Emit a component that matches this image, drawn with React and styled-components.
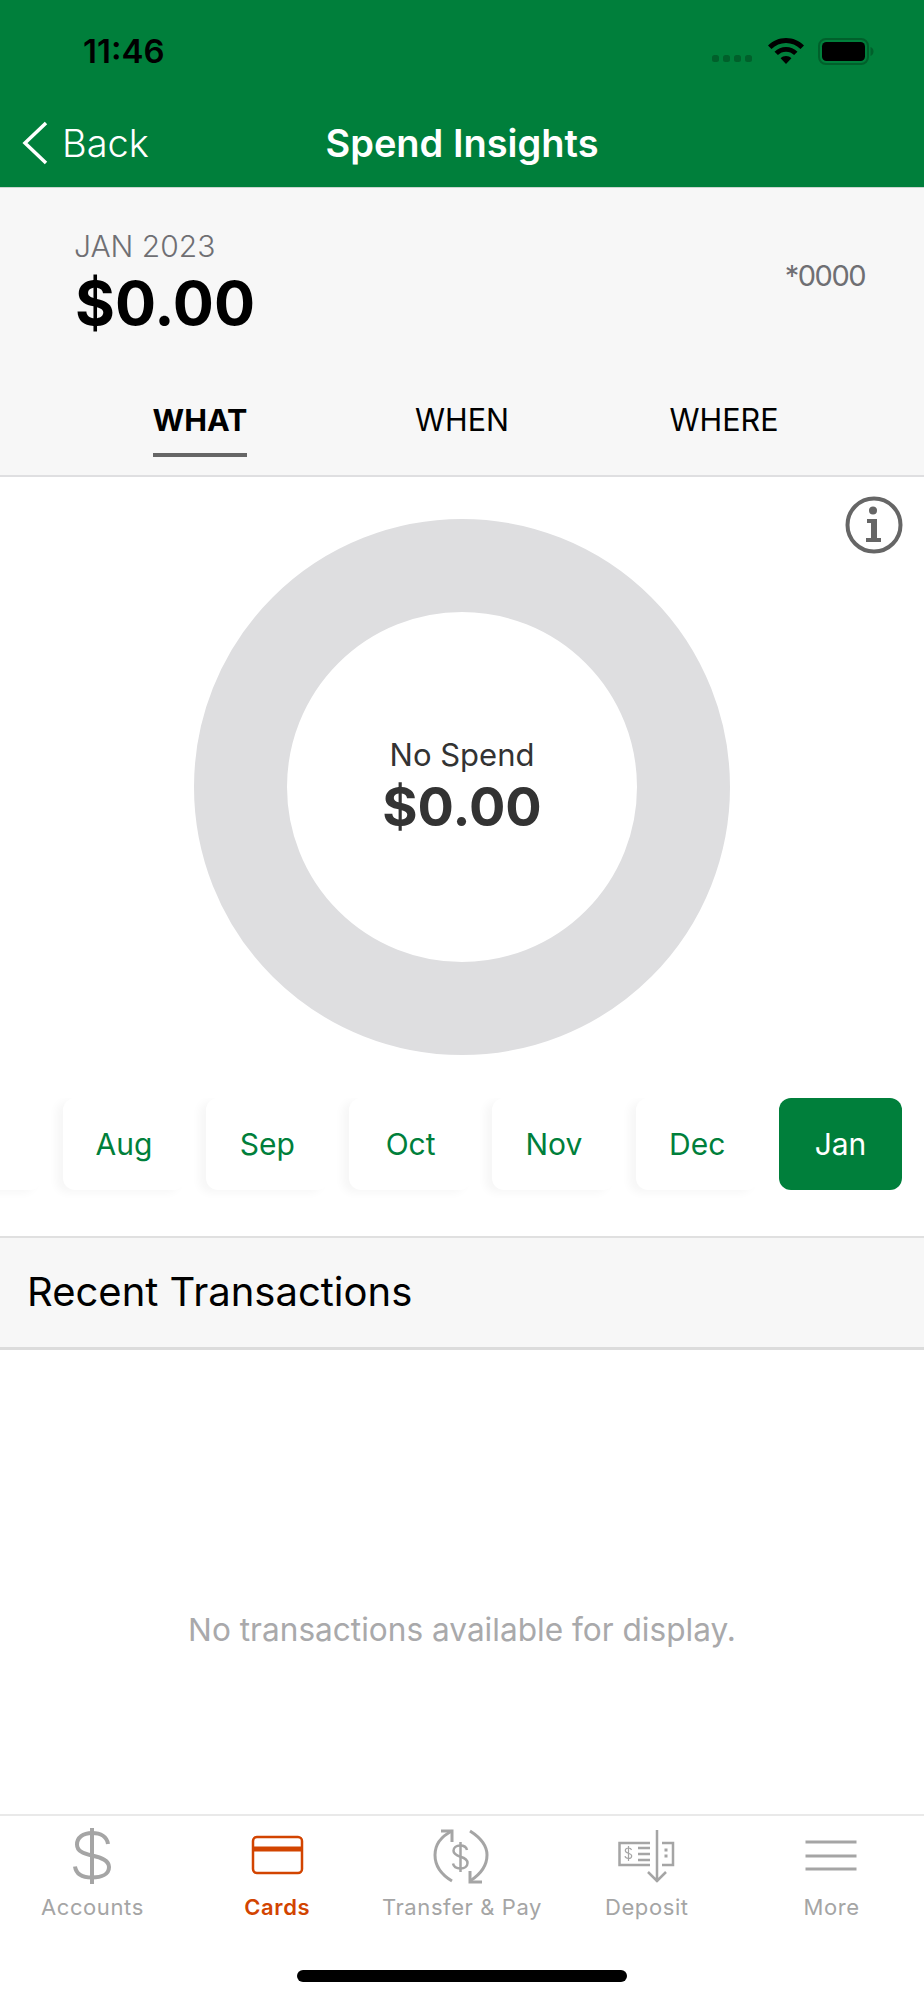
import React from 'react'
import styled, { createGlobalStyle } from 'styled-components'

const GlobalStyle = createGlobalStyle`
    html, body {
        margin: 0;
        padding: 0;
        background: #fff;
    }
    * {
        box-sizing: border-box;
    }
`;

const PAGE = styled.div`
    width: 924px;
    height: 2000px;
    overflow: hidden;
    display: flex;
    flex-direction: column;
    background: #fff;
    font-family: Inter, "Liberation Sans", sans-serif;
`;

const HEADER = styled.header`
    height: 188px;
    flex: none;
    background: #007f3b;
    border-bottom: 1px solid #c9d6cf;
`;

const STATUS_BAR = styled.div`
    height: 95px;
    display: flex;
    justify-content: space-between;
    align-items: flex-start;
    padding: 31px 50px 0 83px;
`;

const TIME = styled.span`
    font-size: 33px;
    line-height: 40px;
    font-weight: 600;
    color: #000;
`;

const NAV = styled.nav`
    display: grid;
    grid-template-columns: 1fr auto 1fr;
    align-items: center;
    height: 92px;
    padding: 3px 22px 0;
    color: #fff;
`;

const BACK = styled.a`
    display: flex;
    align-items: center;
    gap: 14px;
    font-size: 38px;
    font-weight: 300;
`;

const TITLE = styled.h1`
    margin: 0;
    font-size: 38px;
    font-weight: 600;
`;

const SUMMARY = styled.section`
    height: 289px;
    flex: none;
    background: #f7f7f7;
    border-bottom: 2px solid #dfdfe1;
    display: flex;
    flex-direction: column;
`;

const SUMMARY_TOP = styled.div`
    height: 194px;
    display: flex;
    justify-content: space-between;
    padding: 40px 59px 0 75px;
`;

const PERIOD = styled.div`
    font-size: 30px;
    line-height: 36px;
    font-weight: 300;
    color: #6f6f73;
    margin-left: -1px;
`;

const TOTAL = styled.div`
    margin-top: 5px;
    font-size: 61px;
    line-height: 68px;
    font-weight: 700;
    color: #000;
`;

const CARD_NUMBER = styled.div`
    margin-top: 30px;
    font-size: 29px;
    line-height: 36px;
    letter-spacing: -1.5px;
    color: #6f6f73;
`;

const TABS = styled.div`
    display: grid;
    grid-template-columns: 238px 286px 238px;
    justify-content: center;
`;

const TAB = styled.div`
    justify-self: center;
    height: 75px;
    padding-top: 20px;
    font-size: 30.5px;
    line-height: 36px;
    font-weight: ${props => props.active ? 700 : 400};
    color: #000;
    border-bottom: 4px solid ${props => props.active ? '#666' : 'transparent'};
`;

const CHART = styled.section`
    position: relative;
    flex: none;
    height: 621px;
    padding-top: 42px;
    display: flex;
    justify-content: center;
`;

const INFO = styled.svg`
    position: absolute;
    top: 19px;
    right: 21px;
`;

const RING = styled.div`
    width: 536px;
    height: 536px;
    border-radius: 50%;
    border: 93px solid #dedee0;
    display: flex;
    flex-direction: column;
    align-items: center;
    justify-content: center;
`;

const RING_LABEL = styled.div`
    font-size: 31px;
    line-height: 36px;
    color: #333;
`;

const RING_VALUE = styled.div`
    font-size: 54px;
    line-height: 60px;
    font-weight: 700;
    color: #333;
    margin-top: 4px;
`;

const MONTHS = styled.div`
    flex: none;
    height: 138px;
    overflow: hidden;
    display: flex;
    justify-content: flex-end;
    align-items: flex-start;
    gap: 20.3px;
    padding-right: 22px;
    padding-bottom: 12px;
`;

const MONTH = styled.div`
    flex: none;
    width: 123px;
    height: 92px;
    border-radius: 12px;
    display: flex;
    align-items: center;
    justify-content: center;
    font-size: 30px;
    background: ${props => props.active ? '#007f3b' : '#fff'};
    color: ${props => props.active ? '#fff' : '#007f3b'};
    box-shadow: ${props => props.active ? 'none' : '-7px 3px 8px rgba(0, 0, 0, 0.035)'};
`;

const RECENT = styled.h2`
    flex: none;
    height: 114px;
    margin: 0;
    padding: 0 0 3px 27px;
    display: flex;
    align-items: center;
    background: #f7f7f7;
    border-top: 2px solid #e0e0e0;
    border-bottom: 3px solid #dcdcdc;
    font-size: 40px;
    font-weight: 400;
    color: #000;
`;

const EMPTY = styled.div`
    height: 464px;
    flex: none;
    padding-top: 95px;
    display: flex;
    align-items: center;
    justify-content: center;
    font-size: 31.6px;
    color: #a9a9ab;
`;

const TABBAR = styled.footer`
    flex: 1;
    border-top: 2px solid #e9e9e9;
    position: relative;
`;

const TAB_ITEMS = styled.div`
    display: grid;
    grid-template-columns: repeat(5, 1fr);
    padding-top: 11px;
`;

const TAB_ITEM = styled.div`
    display: flex;
    flex-direction: column;
    align-items: center;
    color: ${props => props.active ? '#d24400' : '#a5a5a5'};
`;

const TAB_ICON = styled.svg`
    display: block;
    fill: none;
    stroke: currentColor;
`;

const TAB_LABEL = styled.span`
    margin-top: 2px;
    font-size: 22px;
    line-height: 28px;
    font-weight: ${props => props.active ? 600 : 400};
    letter-spacing: 0.6px;
`;

const HOME_BAR = styled.div`
    position: absolute;
    left: 297px;
    bottom: 18px;
    width: 330px;
    height: 12px;
    border-radius: 6px;
    background: #000;
`;

const STATUS_ICONS = styled.div`
    display: flex;
    align-items: center;
    gap: 14px;
    height: 40px;
`;

const SIGNAL = styled.svg`
    margin-top: 16px;
    fill: #00602b;
`;

const months = ['Aug', 'Sep', 'Oct', 'Nov', 'Dec', 'Jan'];

const tabIcons = {
    Accounts: (
        <TAB_ICON width="60" height="64" viewBox="0 0 60 64" strokeWidth="4">
            <path d="M46 17c-1-7-7-11-16-11-9 0-15 4.500-15 11.500 0 6.500 6 9 15 11 10 2.200 17 5 17 11.500 0 7-7 10.500-17 10.500-10 0-16-4-17-11" />
            <path d="M30 1v56" />
        </TAB_ICON>
    ),
    Cards: (
        <TAB_ICON width="60" height="64" viewBox="0 0 60 64" strokeWidth="2.500">
            <rect x="6" y="10" width="49" height="36" rx="4" />
            <path d="M5 22h51" strokeWidth="5" />
        </TAB_ICON>
    ),
    'Transfer & Pay': (
        <TAB_ICON width="60" height="64" viewBox="0 0 60 64" strokeWidth="3">
            <path d="M20 4C8 10 3 18 3 28c0 11 7 20 17 26" />
            <path d="M9 4h11v11" />
            <path d="M38 4c11 7 17 14 17 24 0 11-6 19-17 26" />
            <path d="M38 44v11h12" />
            <path d="M35 23c-.7-3-3.500-4.500-6.800-4.500-4 0-6.700 2-6.700 5.300 0 3.500 3 4.700 7 6 4 1.200 7 2.700 7 6.200 0 3.500-3 5.500-7 5.500-3.800 0-6.800-1.700-7.500-5" strokeWidth="2.500" />
            <path d="M28.500 15v30" strokeWidth="2.500" />
        </TAB_ICON>
    ),
    Deposit: (
        <TAB_ICON width="60" height="64" viewBox="0 0 60 64" strokeWidth="2.500">
            <path d="M33 16H2.500v22H33M45 16h11v22H45" />
            <path d="M40 3v52M31 45l9 9 9-9" />
            <path d="M21 21h12M21 27h12M21 33h12" strokeWidth="2.500" />
            <path d="M14.500 23c-.4-1.500-1.500-2-3-2-2 0-3.200 1-3.200 2.500 0 3.500 6.400 2 6.400 5.500 0 1.500-1.500 2.500-3.200 2.500-2 0-3.200-.8-3.500-2.300M11.500 19v15" strokeWidth="1.200" />
            <path d="M47.500 23h3M47.500 29h3" strokeWidth="3" />
        </TAB_ICON>
    ),
    More: (
        <TAB_ICON width="60" height="64" viewBox="0 0 60 64" strokeWidth="3">
            <path d="M3.500 15h51M3.500 29h51M3.500 42h51" />
        </TAB_ICON>
    ),
};

const tabItems = ['Accounts', 'Cards', 'Transfer & Pay', 'Deposit', 'More'];

export default function App() {
    return (
        <PAGE>
            <GlobalStyle />
            <HEADER>
                <STATUS_BAR>
                    <TIME>11:46</TIME>
                    <STATUS_ICONS>
                        <SIGNAL width="42" height="8" viewBox="0 0 42 8">
                            <rect x="0" y="0" width="7" height="7" rx="2.500" />
                            <rect x="11" y="0" width="7" height="7" rx="2.500" />
                            <rect x="22" y="0" width="7" height="7" rx="2.500" />
                            <rect x="33" y="0" width="7" height="7" rx="2.500" />
                        </SIGNAL>
                        <svg width="36" height="26" viewBox="0 0 36 26">
                            <path d="M18 0C11 0 5 2.700 0 7.500l3.500 3.500C7.500 7.200 12.500 5 18 5s10.500 2.200 14.500 6L36 7.500C31 2.700 25 0 18 0z" />
                            <path d="M18 9c-4.500 0-8.300 1.700-11.500 4.700l3.400 3.400C12 15 14.900 13.800 18 13.800s6 1.200 8.100 3.300l3.400-3.400C26.300 10.700 22.500 9 18 9z" />
                            <path d="M18 18c-2.200 0-4 .8-5.400 2.200L18 26l5.400-5.800C22 18.800 20.200 18 18 18z" />
                        </svg>
                        <svg width="56" height="27" viewBox="0 0 56 27">
                            <rect x="1" y="1" width="49" height="25" rx="7" fill="none" stroke="#00602b" strokeWidth="2" />
                            <rect x="4" y="4" width="43" height="19" rx="4.500" fill="#000" />
                            <path d="M52.500 9c2 .6 3 2.300 3 4.500s-1 3.900-3 4.500z" fill="#00602b" />
                        </svg>
                    </STATUS_ICONS>
                </STATUS_BAR>
                <NAV>
                    <BACK>
                        <svg width="26" height="44" viewBox="0 0 26 44" fill="none" stroke="#fff" strokeWidth="3.500">
                            <path d="M24 2L3 22l21 20" />
                        </svg>
                        Back
                    </BACK>
                    <TITLE>Spend Insights</TITLE>
                </NAV>
            </HEADER>

            <SUMMARY>
                <SUMMARY_TOP>
                    <div>
                        <PERIOD>JAN 2023</PERIOD>
                        <TOTAL>$0.00</TOTAL>
                    </div>
                    <CARD_NUMBER>*0000</CARD_NUMBER>
                </SUMMARY_TOP>
                <TABS>
                    <TAB active>WHAT</TAB>
                    <TAB>WHEN</TAB>
                    <TAB>WHERE</TAB>
                </TABS>
            </SUMMARY>

            <CHART>
                <INFO width="58" height="58" viewBox="0 0 58 58">
                    <circle cx="29" cy="29" r="26.500" fill="none" stroke="#666" strokeWidth="4" />
                    <circle cx="28" cy="14.500" r="4" fill="#666" />
                    <path d="M22 23h10v19h4v4H21v-4h5V27h-4z" fill="#666" />
                </INFO>
                <RING>
                    <RING_LABEL>No Spend</RING_LABEL>
                    <RING_VALUE>$0.00</RING_VALUE>
                </RING>
            </CHART>

            <MONTHS>
                <MONTH />
                {months.map(month =>
                    <MONTH active={month === 'Jan'} key={month}>{month}</MONTH>
                )}
            </MONTHS>

            <RECENT>Recent Transactions</RECENT>
            <EMPTY>No transactions available for display.</EMPTY>

            <TABBAR>
                <TAB_ITEMS>
                    {tabItems.map(item =>
                        <TAB_ITEM active={item === 'Cards'} key={item}>
                            {tabIcons[item]}
                            <TAB_LABEL active={item === 'Cards'}>{item}</TAB_LABEL>
                        </TAB_ITEM>
                    )}
                </TAB_ITEMS>
                <HOME_BAR />
            </TABBAR>
        </PAGE>
    )
}
